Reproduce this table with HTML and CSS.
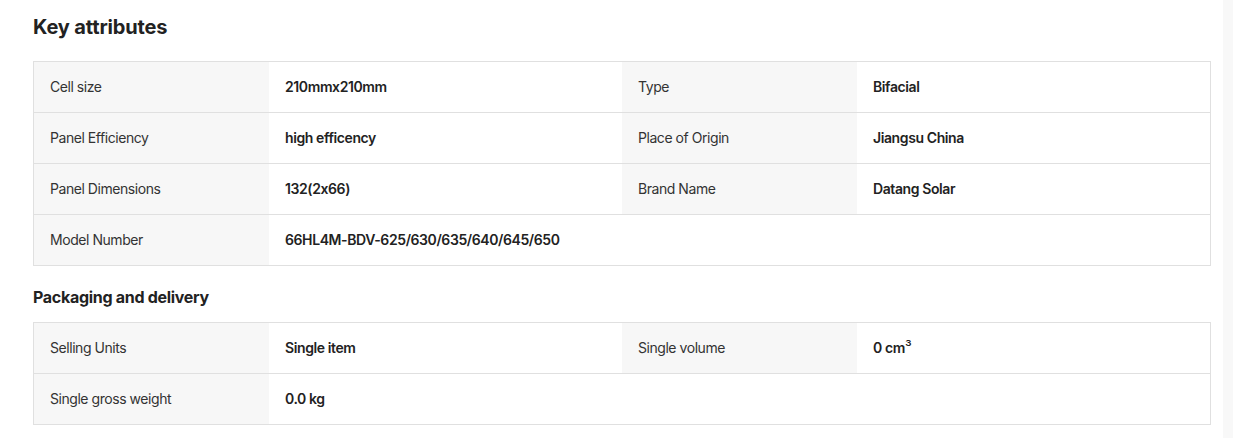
FILE: index.html
```html
<!DOCTYPE html>
<html lang="en">
<head>
<meta charset="utf-8">
<title>Key attributes</title>
<link rel="stylesheet" href="styles.css">
</head>
<body>
<main class="page">
  <h2 class="title">Key attributes</h2>
  <div class="attr-table">
    <div class="row">
      <div class="label">Cell size</div><div class="value">210mmx210mm</div>
      <div class="label">Type</div><div class="value">Bifacial</div>
    </div>
    <div class="row">
      <div class="label">Panel Efficiency</div><div class="value">high efficency</div>
      <div class="label">Place of Origin</div><div class="value">Jiangsu China</div>
    </div>
    <div class="row">
      <div class="label">Panel Dimensions</div><div class="value">132(2x66)</div>
      <div class="label">Brand Name</div><div class="value">Datang Solar</div>
    </div>
    <div class="row">
      <div class="label">Model Number</div><div class="value">66HL4M-BDV-625/630/635/640/645/650</div>
      <div class="empty"></div><div class="empty"></div>
    </div>
  </div>
  <h3 class="subtitle">Packaging and delivery</h3>
  <div class="attr-table">
    <div class="row">
      <div class="label">Selling Units</div><div class="value">Single item</div>
      <div class="label">Single volume</div><div class="value">0 cm<span class="sup">³</span></div>
    </div>
    <div class="row">
      <div class="label">Single gross weight</div><div class="value">0.0 kg</div>
      <div class="empty"></div><div class="empty"></div>
    </div>
  </div>
</main>
</body>
</html>
```

FILE: styles.css
```css
html, body {
  margin: 0;
  padding: 0;
}
body {
  background: #f8f8f8;
  font-family: Inter, "Noto Sans", "Liberation Sans", sans-serif;
  font-feature-settings: "calt" 0;
  color: #222;
}
.page {
  width: 1223px;
  min-height: 438px;
  background: #fff;
  box-sizing: border-box;
  padding: 13px 12px 0 33px;
}
.title {
  margin: 0 0 20px;
  font-size: 20px;
  line-height: 28px;
  font-weight: 700;
  letter-spacing: -0.15px;
  color: #222;
}
.subtitle {
  margin: 19px 0 13px;
  font-size: 16px;
  line-height: 24px;
  font-weight: 700;
  letter-spacing: -0.3px;
  color: #222;
}
.attr-table {
  width: 1178px;
  border: 1px solid #e0e0e0;
  border-bottom: none;
  box-sizing: border-box;
}
.row {
  display: grid;
  grid-template-columns: 235px 353px 235px 353px;
  height: 51px;
  border-bottom: 1px solid #e0e0e0;
  box-sizing: border-box;
}
.label, .value, .empty {
  display: flex;
  align-items: center;
  padding: 0 16px;
  font-size: 14px;
  line-height: 20px;
  letter-spacing: -0.45px;
}
.label {
  background: #f7f7f7;
  color: #333;
  font-weight: 400;
}
.value {
  font-weight: 600;
  color: #222;
  letter-spacing: -0.4px;
}
.sup {
  font-weight: 400;
  font-size: 15px;
  letter-spacing: 0;
}
```
